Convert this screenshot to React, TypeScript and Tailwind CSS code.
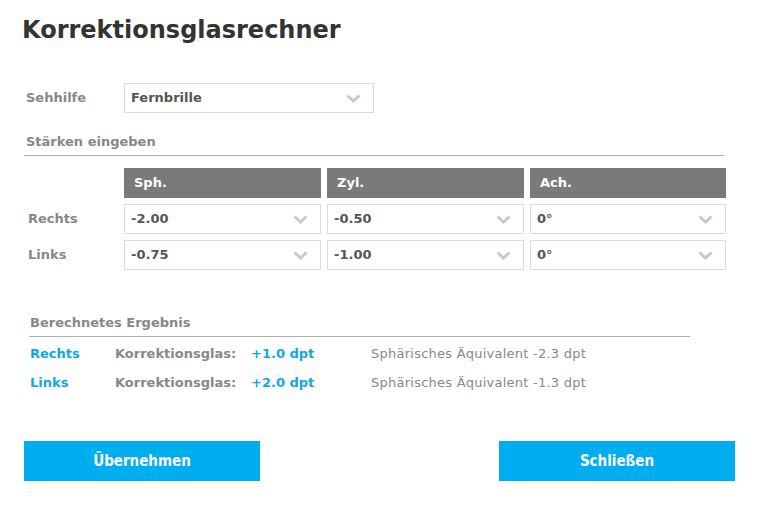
const font = { fontFamily: '"DejaVu Sans", Verdana, sans-serif' };

function Chevron() {
  return (
    <svg width="15" height="9" viewBox="0 0 15 9" className="shrink-0">
      <path d="M1.5 1.5 L7.5 7 L13.5 1.5" fill="none" stroke="#c9c9c9" strokeWidth="3" />
    </svg>
  );
}

function SelectBox({ value, className = '' }: { value: string; className?: string }) {
  return (
    <div
      className={`flex h-[30px] items-center justify-between border border-[#dcdcdc] bg-white pl-[6px] pr-[12px] text-[13px] font-bold text-[#555] ${className}`}
    >
      <span>{value}</span>
      <Chevron />
    </div>
  );
}

const heads = ['Sph.', 'Zyl.', 'Ach.'];
const rows = [
  { label: 'Rechts', values: ['-2.00', '-0.50', '0°'] },
  { label: 'Links', values: ['-0.75', '-1.00', '0°'] },
];
const results = [
  { side: 'Rechts', glas: '+1.0 dpt', sph: '-2.3 dpt' },
  { side: 'Links', glas: '+2.0 dpt', sph: '-1.3 dpt' },
];

export default function App() {
  return (
    <div className="h-[525px] w-[780px] bg-white pl-[24px] pt-[14px]" style={font}>
      <h1 className="ml-[-2px] text-[24px] font-bold leading-[32px] text-[#333]">Korrektionsglasrechner</h1>

      <div className="mt-[37px] flex items-center">
        <div className="w-[100px] pl-[2px] text-[13px] font-bold text-[#888]">Sehhilfe</div>
        <SelectBox value="Fernbrille" className="w-[250px]" />
      </div>

      <div className="mt-[20px] w-[700px] border-b border-[#b0b0b0] pb-[4px] pl-[2px] text-[13px] font-bold leading-[18px] text-[#888]">
        Stärken eingeben
      </div>

      <div className="mt-[12px] grid w-[702px] grid-cols-[94px_197px_197px_196px] gap-x-[6px] gap-y-[6px]">
        <div />
        {heads.map((h) => (
          <div key={h} className="flex h-[30px] items-center bg-[#7a7a7a] pl-[10px] text-[13px] font-bold text-white">
            {h}
          </div>
        ))}
        {rows.map((r) => (
          <>
            <div key={r.label} className="flex h-[30px] items-center pl-[4px] text-[13px] font-bold text-[#888]">
              {r.label}
            </div>
            {r.values.map((v, i) => (
              <SelectBox key={r.label + i} value={v} />
            ))}
          </>
        ))}
      </div>

      <div className="ml-[5px] mt-[44px] w-[661px] border-b border-[#b0b0b0] pb-[4px] pl-[1px] text-[13px] font-bold leading-[18px] text-[#888]">
        Berechnetes Ergebnis
      </div>

      <div className="ml-[6px] mt-[2px] flex flex-col text-[13px]">
        {results.map((r) => (
          <div key={r.side} className="flex h-[29px] items-center">
            <span className="w-[85px] font-bold text-[#0fa8e6]">{r.side}</span>
            <span className="w-[136px] font-bold text-[#888]">Korrektionsglas:</span>
            <span className="w-[120px] font-bold text-[#0fa8e6]">{r.glas}</span>
            <span className="tracking-[0.25px] text-[#888]">Sphärisches Äquivalent {r.sph}</span>
          </div>
        ))}
      </div>

      <div className="mt-[44px] flex w-[711px] justify-between">
        {['Übernehmen', 'Schließen'].map((b) => (
          <button
            key={b}
            className="h-[40px] w-[236px] bg-[#00aeef] text-[15px] font-bold text-white"
            style={{ fontFamily: '"Liberation Sans Narrow", "DejaVu Sans Condensed", "Liberation Sans", sans-serif' }}
          >
            {b}
          </button>
        ))}
      </div>
    </div>
  );
}
